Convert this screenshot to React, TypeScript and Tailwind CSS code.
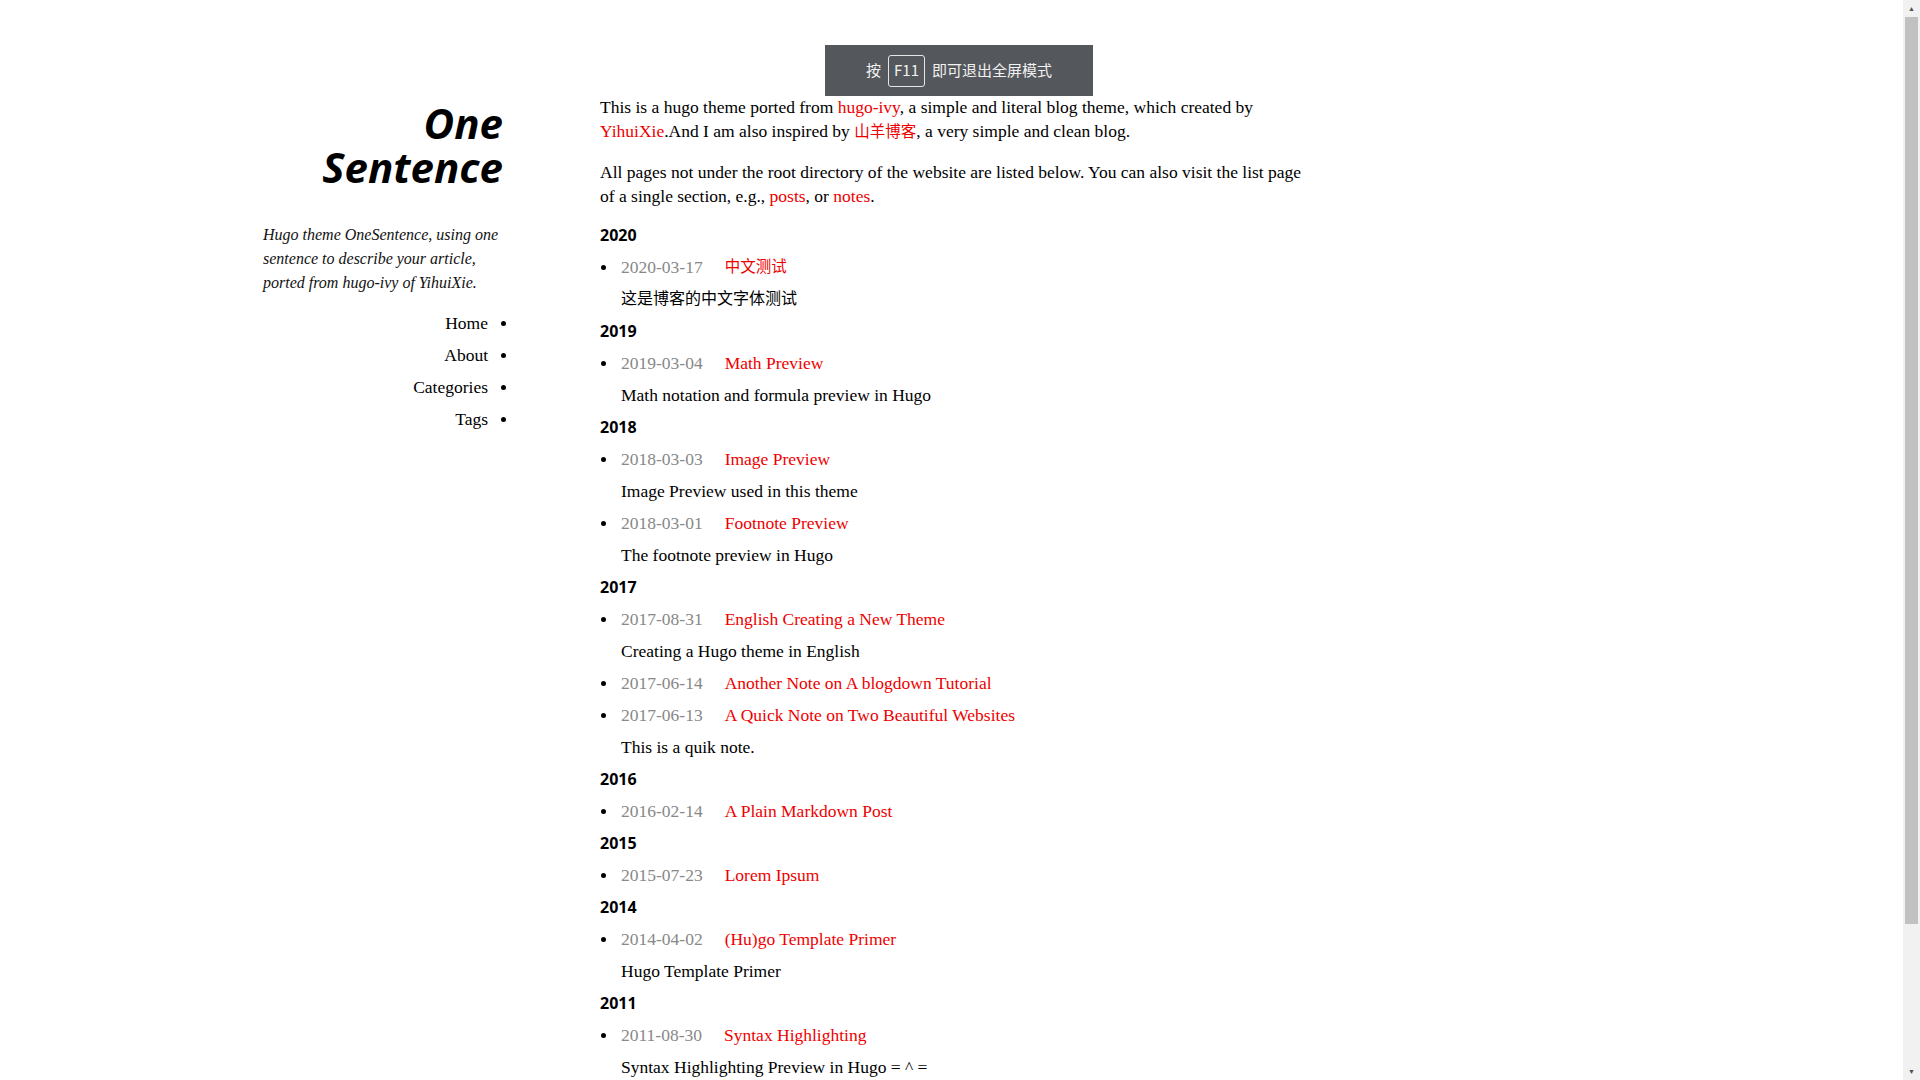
const serif = "font-['Liberation_Serif','Noto_Sans_CJK_SC',serif]";

type Post = { date: string; title: string; summary?: string; cjk?: boolean };

const archive: { year: string; posts: Post[] }[] = [
  {
    year: "2020",
    posts: [{ date: "2020-03-17", title: "中文测试", summary: "这是博客的中文字体测试", cjk: true }],
  },
  {
    year: "2019",
    posts: [{ date: "2019-03-04", title: "Math Preview", summary: "Math notation and formula preview in Hugo" }],
  },
  {
    year: "2018",
    posts: [
      { date: "2018-03-03", title: "Image Preview", summary: "Image Preview used in this theme" },
      { date: "2018-03-01", title: "Footnote Preview", summary: "The footnote preview in Hugo" },
    ],
  },
  {
    year: "2017",
    posts: [
      { date: "2017-08-31", title: "English Creating a New Theme", summary: "Creating a Hugo theme in English" },
      { date: "2017-06-14", title: "Another Note on A blogdown Tutorial" },
      { date: "2017-06-13", title: "A Quick Note on Two Beautiful Websites", summary: "This is a quik note." },
    ],
  },
  { year: "2016", posts: [{ date: "2016-02-14", title: "A Plain Markdown Post" }] },
  { year: "2015", posts: [{ date: "2015-07-23", title: "Lorem Ipsum" }] },
  {
    year: "2014",
    posts: [{ date: "2014-04-02", title: "(Hu)go Template Primer", summary: "Hugo Template Primer" }],
  },
  {
    year: "2011",
    posts: [
      { date: "2011-08-30", title: "Syntax Highlighting", summary: "Syntax Highlighting Preview in Hugo = ^ =" },
    ],
  },
];

const navItems = ["Home", "About", "Categories", "Tags"];

const Sidebar = () => (
  <aside className="w-[300px] shrink-0 flex flex-col items-end pt-[101px]">
    {/* Site title */}
    <h1 className="text-right text-[42px] leading-[44px] font-bold italic text-black font-['Open_Sans',sans-serif]">
      One
      <br />
      Sentence
    </h1>
    <p className="mt-[34px] w-[240px] text-[16px] leading-[24px] italic text-[#111] font-['Liberation_Serif',serif]">
      Hugo theme OneSentence, using one sentence to describe your article, ported from hugo-ivy of YihuiXie.
    </p>
    {/* Menu, bullets sit on the right */}
    <ul className={`mt-[12px] mr-[-3px] flex flex-col items-end text-[17.5px] text-black ${serif}`}>
      {navItems.map((item) => (
        <li key={item} className="h-8 flex items-center">
          <a href="#">{item}</a>
          <span className="ml-[13px] w-[5px] h-[5px] rounded-full bg-black" />
        </li>
      ))}
    </ul>
  </aside>
);

const Main = () => (
  <main className={`ml-[97px] w-[712px] pt-[95px] pb-[180px] text-[17.5px] leading-[24px] text-black ${serif}`}>
    <p>
      This is a hugo theme ported from{" "}
      <a href="#" className="text-[#ee0000]">
        hugo-ivy
      </a>
      , a simple and literal blog theme, which created by{" "}
      <a href="#" className="text-[#ee0000]">
        YihuiXie
      </a>
      .And I am also inspired by{" "}
      <a href="#" className="text-[#ee0000] text-[15.5px]">
        山羊博客
      </a>
      , a very simple and clean blog.
    </p>
    <p className="mt-4">
      All pages not under the root directory of the website are listed below. You can also visit the list page of a
      single section, e.g.,{" "}
      <a href="#" className="text-[#ee0000]">
        posts
      </a>
      , or{" "}
      <a href="#" className="text-[#ee0000]">
        notes
      </a>
      .
    </p>

    <div className="mt-[11px]">
      {archive.map((group) => (
        <section key={group.year}>
          <h2 className="h-8 flex items-center text-[16px] font-bold font-['Open_Sans',sans-serif]">{group.year}</h2>
          <ul>
            {group.posts.map((post) => (
              <li key={post.date}>
                <div className="h-8 flex items-center">
                  <span className="w-[21px] flex">
                    <span className="ml-px w-[5px] h-[5px] rounded-full bg-black" />
                  </span>
                  <span className="text-[#888] mr-[22px]">{post.date}</span>
                  <a href="#" className={post.cjk ? "text-[#ee0000] text-[15.5px]" : "text-[#ee0000]"}>
                    {post.title}
                  </a>
                </div>
                {post.summary && (
                  <div className={post.cjk ? "h-8 flex items-center pl-[21px] text-[16px]" : "h-8 flex items-center pl-[21px]"}>
                    {post.summary}
                  </div>
                )}
              </li>
            ))}
          </ul>
        </section>
      ))}
    </div>
  </main>
);

export default function App() {
  return (
    <div className="relative min-h-screen bg-white">
      <div className="flex pl-[203px]">
        <Sidebar />
        <Main />
      </div>

      {/* Browser fullscreen hint */}
      <div className="absolute left-[825px] top-[45px] w-[268px] h-[51px] bg-[#54575b] flex items-center justify-center gap-[7px] text-[15px] text-[#f2f2f2] font-['Noto_Sans_CJK_SC',sans-serif]">
        <span>按</span>
        <span className="w-[37px] h-[32px] border border-[#e6e6e6] rounded-[3px] flex items-center justify-center">
          F11
        </span>
        <span>即可退出全屏模式</span>
      </div>

      {/* Browser scrollbar */}
      <div className="fixed right-0 top-0 w-[17px] h-screen bg-[#f1f1f1] flex flex-col items-center">
        <span className="h-[17px] flex items-center text-[7px] leading-none text-[#505050]">▲</span>
        <span className="w-[13px] h-[907px] bg-[#c1c1c1]" />
        <span className="mt-auto h-[17px] flex items-center text-[7px] leading-none text-[#505050]">▼</span>
      </div>
    </div>
  );
}
